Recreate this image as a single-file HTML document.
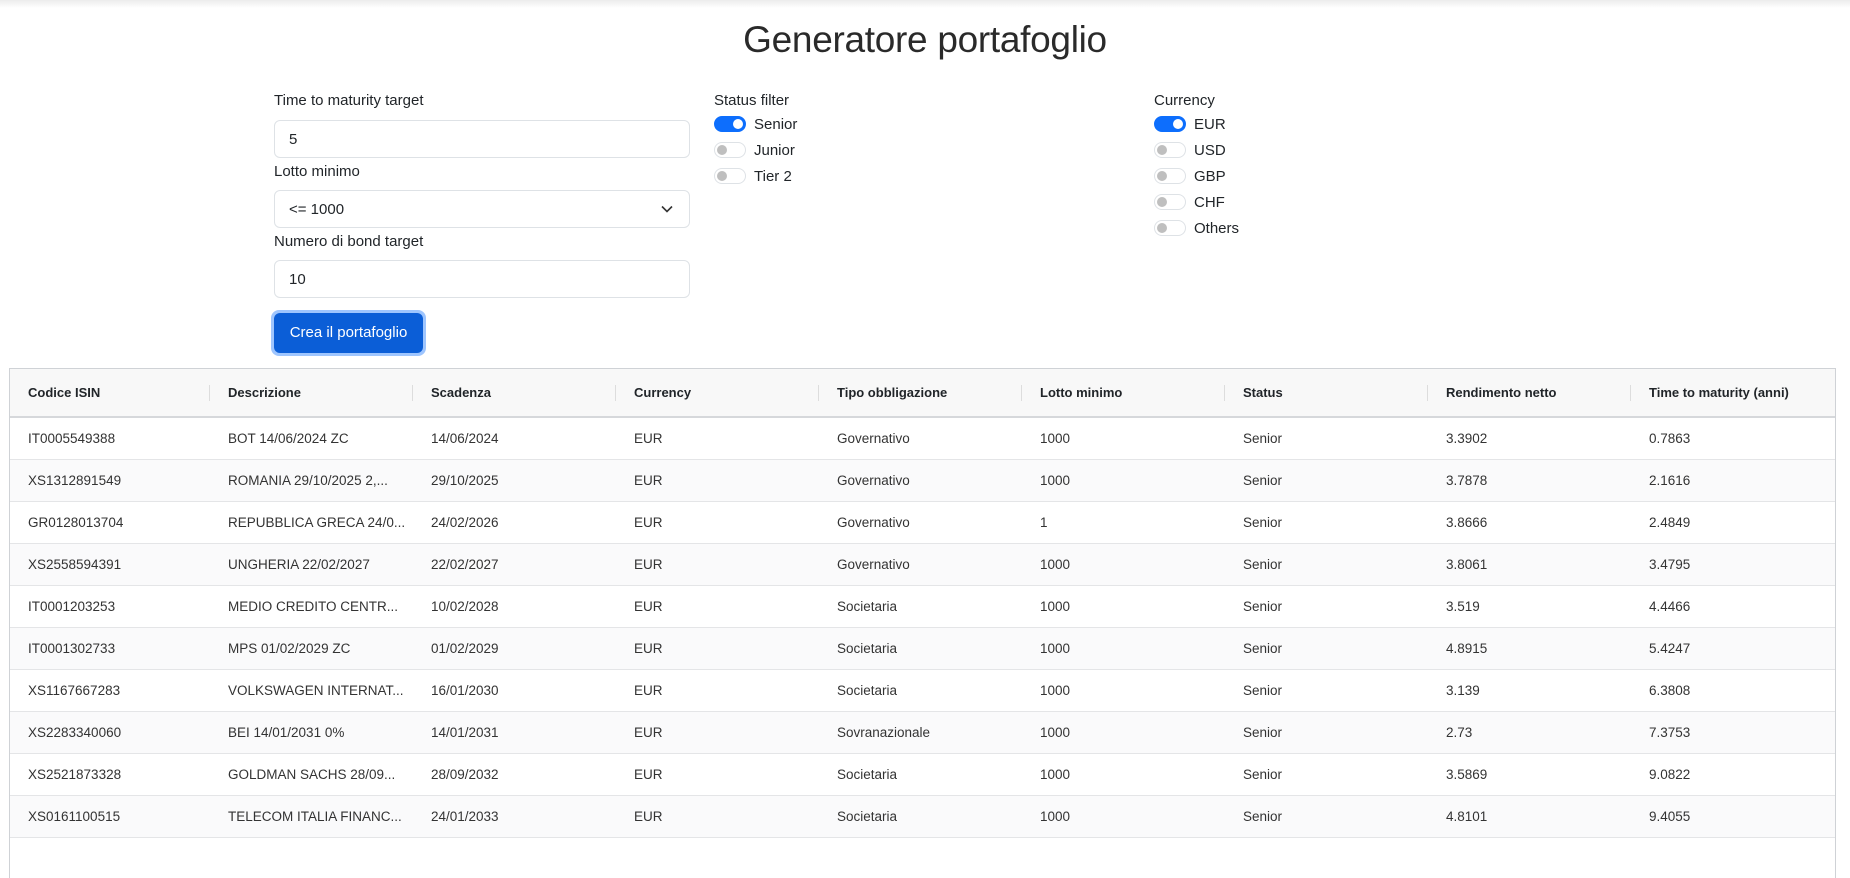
<!DOCTYPE html>
<html><head><meta charset="utf-8"><style>
*{box-sizing:border-box;margin:0;padding:0}
body{width:1850px;height:867px;overflow:hidden;background:#fff;font-family:"Liberation Sans",sans-serif;color:#212529;position:relative}
.topsh{position:absolute;left:0;top:0;width:1850px;height:8px;background:linear-gradient(#ececec,#fff)}
h1{position:absolute;left:0;width:1850px;top:19px;text-align:center;font-weight:normal;font-size:37px;color:#2a2a2a;letter-spacing:-0.3px}
.lbl{position:absolute;font-size:15px;color:#212529}
.inp{position:absolute;left:274px;width:416px;height:38px;border:1px solid #dee2e6;border-radius:6px;font-size:15px;padding:10px 14px;line-height:18px}
.btn{position:absolute;left:271px;top:310px;width:155px;height:46px;border-radius:8px;background:#9ec5fe;padding:3px}
.btn div{width:100%;height:100%;background:#0b5ed7;border-radius:6px;color:#fff;font-size:15px;text-align:center;line-height:40px}
.sw{position:absolute;width:32px;height:16px;border-radius:8px;border:1px solid #dee2e6;background:#fff}
.sw::after{content:"";position:absolute;left:2px;top:2px;width:10px;height:10px;border-radius:50%;background:#bfbfbf}
.sw.on{background:#0d6efd;border-color:#0d6efd}
.sw.on::after{left:18px;background:#fff}
.st{position:absolute;font-size:15px}
table{position:absolute;left:9px;top:368px;width:1826px;border-collapse:collapse;font-size:13.5px}
.tb{position:absolute;left:9px;top:368px;width:1827px;height:510px;border:1px solid #cfd2d6;border-bottom:none;z-index:2}
th{height:49px;background:#f8f8f8;text-align:left;font-weight:bold;padding-left:19px;border-bottom:2px solid #d6d8db;position:relative;font-size:13px}
th+th::before{content:"";position:absolute;left:0;top:17px;height:16px;border-left:1px solid #ddd}
td{height:42px;padding-left:19px;border-bottom:1px solid #e4e5e7;color:#333}
tr:nth-child(odd) td{background:#fafafb}
</style></head><body>
<div class="topsh"></div>
<h1>Generatore portafoglio</h1>
<div class="lbl" style="left:274px;top:92px">Time to maturity target</div>
<div class="inp" style="top:120px">5</div>
<div class="lbl" style="left:274px;top:163px">Lotto minimo</div>
<div class="inp" style="top:190px">&lt;= 1000<svg style="position:absolute;right:16px;top:14px" width="12" height="8" viewBox="0 0 12 8"><path d="M1 1.5l5 5 5-5" fill="none" stroke="#333" stroke-width="1.6"/></svg></div>
<div class="lbl" style="left:274px;top:233px">Numero di bond target</div>
<div class="inp" style="top:260px">10</div>
<div class="btn"><div>Crea il portafoglio</div></div>

<div class="lbl" style="left:714px;top:92px">Status filter</div>
<div class="sw on" style="left:714px;top:116px"></div><div class="st" style="left:754px;top:116px">Senior</div>
<div class="sw" style="left:714px;top:142px"></div><div class="st" style="left:754px;top:142px">Junior</div>
<div class="sw" style="left:714px;top:168px"></div><div class="st" style="left:754px;top:168px">Tier 2</div>

<div class="lbl" style="left:1154px;top:92px">Currency</div>
<div class="sw on" style="left:1154px;top:116px"></div><div class="st" style="left:1194px;top:116px">EUR</div>
<div class="sw" style="left:1154px;top:142px"></div><div class="st" style="left:1194px;top:142px">USD</div>
<div class="sw" style="left:1154px;top:168px"></div><div class="st" style="left:1194px;top:168px">GBP</div>
<div class="sw" style="left:1154px;top:194px"></div><div class="st" style="left:1194px;top:194px">CHF</div>
<div class="sw" style="left:1154px;top:220px"></div><div class="st" style="left:1194px;top:220px">Others</div>

<div class="tb"></div>
<table>
<colgroup><col style="width:200px"><col style="width:203px"><col style="width:203px"><col style="width:203px"><col style="width:203px"><col style="width:203px"><col style="width:203px"><col style="width:203px"><col style="width:205px"></colgroup>
<tr><th>Codice ISIN</th><th>Descrizione</th><th>Scadenza</th><th>Currency</th><th>Tipo obbligazione</th><th>Lotto minimo</th><th>Status</th><th>Rendimento netto</th><th>Time to maturity (anni)</th></tr>
<tr><td>IT0005549388</td><td>BOT 14/06/2024 ZC</td><td>14/06/2024</td><td>EUR</td><td>Governativo</td><td>1000</td><td>Senior</td><td>3.3902</td><td>0.7863</td></tr>
<tr><td>XS1312891549</td><td>ROMANIA 29/10/2025 2,...</td><td>29/10/2025</td><td>EUR</td><td>Governativo</td><td>1000</td><td>Senior</td><td>3.7878</td><td>2.1616</td></tr>
<tr><td>GR0128013704</td><td>REPUBBLICA GRECA 24/0...</td><td>24/02/2026</td><td>EUR</td><td>Governativo</td><td>1</td><td>Senior</td><td>3.8666</td><td>2.4849</td></tr>
<tr><td>XS2558594391</td><td>UNGHERIA 22/02/2027</td><td>22/02/2027</td><td>EUR</td><td>Governativo</td><td>1000</td><td>Senior</td><td>3.8061</td><td>3.4795</td></tr>
<tr><td>IT0001203253</td><td>MEDIO CREDITO CENTR...</td><td>10/02/2028</td><td>EUR</td><td>Societaria</td><td>1000</td><td>Senior</td><td>3.519</td><td>4.4466</td></tr>
<tr><td>IT0001302733</td><td>MPS 01/02/2029 ZC</td><td>01/02/2029</td><td>EUR</td><td>Societaria</td><td>1000</td><td>Senior</td><td>4.8915</td><td>5.4247</td></tr>
<tr><td>XS1167667283</td><td>VOLKSWAGEN INTERNAT...</td><td>16/01/2030</td><td>EUR</td><td>Societaria</td><td>1000</td><td>Senior</td><td>3.139</td><td>6.3808</td></tr>
<tr><td>XS2283340060</td><td>BEI 14/01/2031 0%</td><td>14/01/2031</td><td>EUR</td><td>Sovranazionale</td><td>1000</td><td>Senior</td><td>2.73</td><td>7.3753</td></tr>
<tr><td>XS2521873328</td><td>GOLDMAN SACHS 28/09...</td><td>28/09/2032</td><td>EUR</td><td>Societaria</td><td>1000</td><td>Senior</td><td>3.5869</td><td>9.0822</td></tr>
<tr><td>XS0161100515</td><td>TELECOM ITALIA FINANC...</td><td>24/01/2033</td><td>EUR</td><td>Societaria</td><td>1000</td><td>Senior</td><td>4.8101</td><td>9.4055</td></tr>
</table>
</body></html>
